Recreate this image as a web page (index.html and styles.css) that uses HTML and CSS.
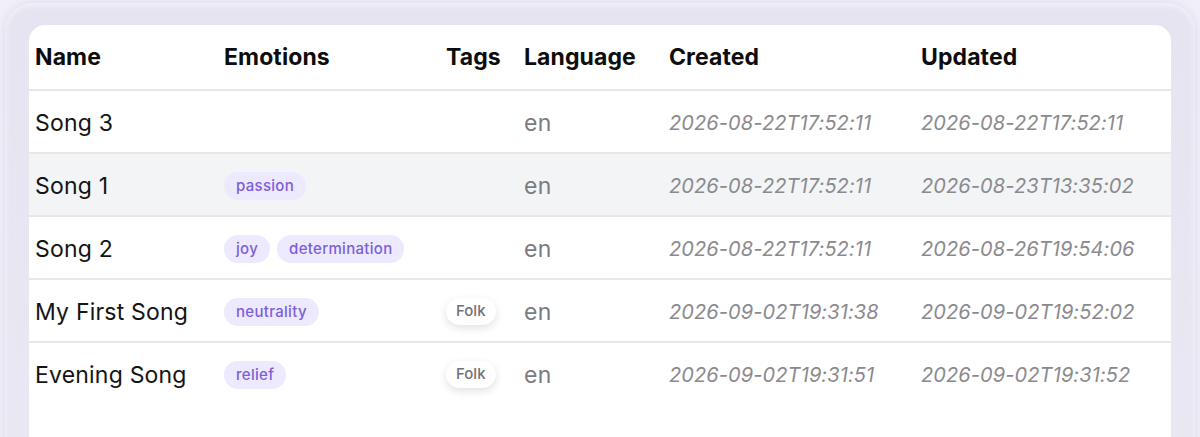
FILE: index.html
```html
<!DOCTYPE html>
<html>
<head>
<meta charset="utf-8">
<link rel="stylesheet" href="styles.css">
</head>
<body>
<div class="panel">
  <div class="card">
    <table class="songs">
      <colgroup>
        <col class="c-name"><col class="c-emo"><col class="c-tags"><col class="c-lang"><col class="c-created"><col class="c-updated">
      </colgroup>
      <thead>
        <tr><th>Name</th><th>Emotions</th><th>Tags</th><th>Language</th><th>Created</th><th>Updated</th></tr>
      </thead>
      <tbody>
        <tr><td class="name">Song 3</td><td></td><td></td><td class="lang">en</td><td class="date">2026-08-22T17:52:11</td><td class="date">2026-08-22T17:52:11</td></tr>
        <tr class="hover"><td class="name">Song 1</td><td><span class="emo">passion</span></td><td></td><td class="lang">en</td><td class="date">2026-08-22T17:52:11</td><td class="date">2026-08-23T13:35:02</td></tr>
        <tr><td class="name">Song 2</td><td><span class="emo">joy</span><span class="emo">determination</span></td><td></td><td class="lang">en</td><td class="date">2026-08-22T17:52:11</td><td class="date">2026-08-26T19:54:06</td></tr>
        <tr><td class="name">My First Song</td><td><span class="emo">neutrality</span></td><td><span class="tag">Folk</span></td><td class="lang">en</td><td class="date">2026-09-02T19:31:38</td><td class="date">2026-09-02T19:52:02</td></tr>
        <tr><td class="name">Evening Song</td><td><span class="emo">relief</span></td><td><span class="tag">Folk</span></td><td class="lang">en</td><td class="date">2026-09-02T19:31:51</td><td class="date">2026-09-02T19:31:52</td></tr>
      </tbody>
    </table>
  </div>
</div>
</body>
</html>
```
FILE: styles.css
```css
html, body {
  margin: 0;
  padding: 0;
  background: #f1f0f8;
  font-family: Inter, "Liberation Sans", sans-serif;
}
.panel {
  margin: 3px 5px 0 5px;
  padding: 22px 24px 40px 24px;
  background: linear-gradient(180deg, #e6e4f0 0%, #e9e8f3 100%);
  border-radius: 28px;
  box-shadow: inset 0 2px 6px rgba(255,255,255,0.6), 0 0 8px rgba(200,196,225,0.5);
  height: 500px;
}
.card {
  background: #fff;
  border-radius: 16px;
  height: 100%;
  overflow: hidden;
}
.songs {
  width: 100%;
  table-layout: fixed;
  border-collapse: collapse;
}
.c-name { width: 189px; }
.c-emo { width: 222px; }
.c-tags { width: 78px; }
.c-lang { width: 145px; }
.c-created { width: 252px; }
.c-updated { width: 256px; }
th {
  text-align: left;
  font-size: 23px;
  font-weight: 700;
  color: #0d0d0d;
  height: 64px;
  padding: 0 6px;
  border-bottom: 2px solid #e7e7ea;
  vertical-align: middle;
  letter-spacing: 0.1px;
  white-space: nowrap;
}
td {
  height: 59px;
  padding: 2px 6px 0 6px;
  border-bottom: 2px solid #e7e7ea;
  vertical-align: middle;
  white-space: nowrap;
}
tbody tr:last-child td { border-bottom: none; }
tr.hover td { background: #f3f4f6; }
.name {
  font-size: 23px;
  color: #141414;
  letter-spacing: 0.2px;
}
.lang {
  font-size: 23px;
  color: #7b7b7f;
  letter-spacing: 0.3px;
}
.date {
  font-size: 20px;
  font-style: italic;
  color: #8a8a8e;
  letter-spacing: 0.1px;
}
.emo {
  display: inline-block;
  background: #ede9fe;
  color: #7b5fd9;
  font-size: 15px;
  font-weight: 500;
  padding: 4px 12px 5px;
  border-radius: 999px;
  margin-right: 7px;
  letter-spacing: 0.3px;
}
.tag {
  display: inline-block;
  background: #fff;
  color: #717176;
  font-size: 15px;
  font-weight: 500;
  padding: 3px 10px 5px;
  border-radius: 999px;
  box-shadow: 0 3px 8px rgba(0,0,0,0.12);
}
```
